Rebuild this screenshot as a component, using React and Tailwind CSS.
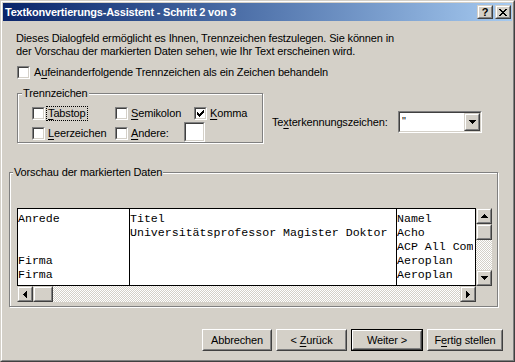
import React from 'react'

const UI = "font-['Liberation_Sans',Arial,sans-serif] text-[11px] tracking-[-0.14px] text-black"

function Check({ checked }) {
  return (
    <span className="flex h-[13px] w-[13px] shrink-0 border border-t-[#808080] border-l-[#808080] border-r-white border-b-white">
      <span className="flex flex-1 items-center justify-center border border-t-[#404040] border-l-[#404040] border-r-[#d4d0c8] border-b-[#d4d0c8] bg-white">
        {checked && (
          <svg width="7" height="7" viewBox="0 0 7 7" shapeRendering="crispEdges">
            <path d="M0 2h1v1h1v1h1v-1h1v-1h1v-1h1v-1h1v3h-1v1h-1v1h-1v1h-1v1h-1v-1h-1v-1h-1v-1h-1z" fill="#000" />
          </svg>
        )}
      </span>
    </span>
  )
}

function CheckRow({ checked, focus, children, className = '' }) {
  return (
    <div className={`flex items-center gap-[1px] ${className}`}>
      <Check checked={checked} />
      <span
        className={`border pl-[1px] pr-[1px] leading-[13px] ${
          focus ? 'border-dotted border-black' : 'border-transparent'
        }`}
      >
        {children}
      </span>
    </div>
  )
}

function U({ children }) {
  return <span className="underline underline-offset-[2px]">{children}</span>
}

function Raised({ children, className = '' }) {
  return (
    <div className={`flex border border-t-[#d4d0c8] border-l-[#d4d0c8] border-r-[#404040] border-b-[#404040] ${className}`}>
      <div className="flex flex-1 items-center justify-center border border-t-white border-l-white border-r-[#808080] border-b-[#808080] bg-[#d4d0c8]">
        {children}
      </div>
    </div>
  )
}

function Arrow({ dir }) {
  const paths = {
    up: 'M3 0h1v1h1v1h1v1h1v1h-7v-1h1v-1h1v-1h1z',
    down: 'M0 0h7v1h-1v1h-1v1h-1v1h-1v-1h-1v-1h-1v-1h-1z',
    left: 'M3 0h1v7h-1v-1h-1v-1h-1v-1h-1v-1h1v-1h1v-1h1z',
    right: 'M0 0h1v1h1v1h1v1h1v1h-1v1h-1v1h-1v1h-1z',
  }
  const vert = dir === 'up' || dir === 'down'
  return (
    <svg width={vert ? 7 : 4} height={vert ? 4 : 7} viewBox={vert ? '0 0 7 4' : '0 0 4 7'} shapeRendering="crispEdges">
      <path d={paths[dir]} fill="#000" />
    </svg>
  )
}

function Button({ children, w, isDefault }) {
  const face = (
    <div className="flex h-full border border-t-white border-l-white border-r-[#404040] border-b-[#404040]">
      <div className="flex flex-1 items-center justify-center border border-t-[#d4d0c8] border-l-[#d4d0c8] border-r-[#808080] border-b-[#808080] leading-[13px] whitespace-pre">
        {children}
      </div>
    </div>
  )
  return (
    <div className={`h-[22px] ${w} ${isDefault ? 'border border-black' : ''}`}>{face}</div>
  )
}

const rows = [
  ['Anrede', 'Titel', 'Namel'],
  ['', 'Universitätsprofessor Magister Doktor', 'Acho'],
  ['', '', 'ACP All Company'],
  ['Firma', '', 'Aeroplan'],
  ['Firma', '', 'Aeroplan'],
]

const track =
  'bg-[image:repeating-conic-gradient(#ffffff_0%_25%,#d4d0c8_0%_50%)] bg-size-[2px_2px]'

export default function App() {
  return (
    <div className={`h-[362px] w-[515px] overflow-hidden ${UI}`}>
      <div className="flex h-full flex-col border border-t-[#d4d0c8] border-l-[#d4d0c8] border-r-[#404040] border-b-[#404040]">
        <div className="flex flex-1 flex-col border border-t-white border-l-white border-r-[#808080] border-b-[#808080] bg-[#d4d0c8] p-[1px]">
          {/* title bar */}
          <div className="flex h-[18px] shrink-0 items-center justify-between bg-linear-to-r from-[#0a246a] to-[#a6caf0] pl-[2px] pr-[1px]">
            <span className="text-[11px] font-bold tracking-[-0.2px] text-white">Textkonvertierungs-Assistent - Schritt 2 von 3</span>
            <div className="flex gap-[2px]">
              <Raised className="h-[14px] w-[16px]">
                <span className="text-[11px] leading-[10px] font-bold">?</span>
              </Raised>
              <Raised className="h-[14px] w-[16px]">
                <svg width="8" height="7" viewBox="0 0 8 7" shapeRendering="crispEdges">
                  <path d="M0 0h2v1h1v1h2v-1h1v-1h2v1h-1v1h-1v1h-1v1h1v1h1v1h1v1h-2v-1h-1v-1h-2v1h-1v1h-2v-1h1v-1h1v-1h1v-1h-1v-1h-1z" fill="#000" />
                </svg>
              </Raised>
            </div>
          </div>

          {/* intro text */}
          <p className="mt-[11px] ml-[13px] leading-[13px]">
            Dieses Dialogfeld ermöglicht es Ihnen, Trennzeichen festzulegen. Sie können in
            <br />
            der Vorschau der markierten Daten sehen, wie Ihr Text erscheinen wird.
          </p>

          <div className="mt-[8px] ml-[14px] flex h-[13px] items-center gap-[4px]">
            <Check />
            <span className="leading-[13px]">
              A<U>u</U>feinanderfolgende Trennzeichen als ein Zeichen behandeln
            </span>
          </div>

          {/* delimiters + text qualifier */}
          <div className="mt-[14px] ml-[14px] flex items-start">
            <div className="relative h-[50px] w-[246px] shrink-0 border border-[#808080] shadow-[inset_1px_1px_0_#ffffff,1px_1px_0_#ffffff]">
              <span className="absolute top-[-7px] left-[4px] bg-[#d4d0c8] px-[1px] leading-[13px]">Trennzeichen</span>
              <div className="pt-[12px] pl-[14px]">
                <div className="flex h-[15px] items-center">
                  <CheckRow focus className="w-[83px]">
                    <U>T</U>abstop
                  </CheckRow>
                  <CheckRow className="w-[79px]">
                    <U>S</U>emikolon
                  </CheckRow>
                  <CheckRow checked>
                    <U>K</U>omma
                  </CheckRow>
                </div>
                <div className="flex h-[21px] items-end">
                  <CheckRow className="mb-[1px] w-[83px]">
                    <U>L</U>eerzeichen
                  </CheckRow>
                  <CheckRow className="mb-[1px] w-[69px]">
                    <U>A</U>ndere:
                  </CheckRow>
                  <div className="flex h-[20px] w-[21px] border border-t-[#808080] border-l-[#808080] border-r-white border-b-white">
                    <div className="flex-1 border border-t-[#404040] border-l-[#404040] border-r-[#d4d0c8] border-b-[#d4d0c8] bg-white" />
                  </div>
                </div>
              </div>
            </div>

            <div className="mt-[18px] ml-[9px] flex h-[22px] items-center">
              <span className="w-[126px] leading-[13px]">
                Te<U>x</U>terkennungszeichen:
              </span>
              <div className="flex h-[22px] w-[84px] border border-t-[#808080] border-l-[#808080] border-r-white border-b-white">
                <div className="flex flex-1 border border-t-[#404040] border-l-[#404040] border-r-[#d4d0c8] border-b-[#d4d0c8] bg-white">
                  <span className="flex-1 pl-[2px] leading-[16px]">"</span>
                  <Raised className="h-[18px] w-[16px]">
                    <Arrow dir="down" />
                  </Raised>
                </div>
              </div>
            </div>
          </div>

          {/* preview */}
          <div className="relative mt-[29px] ml-[6px] h-[135px] w-[489px] shrink-0 border border-[#808080] shadow-[inset_1px_1px_0_#ffffff,1px_1px_0_#ffffff]">
            <span className="absolute top-[-7px] left-[3px] bg-[#d4d0c8] px-[1px] leading-[13px]">
              Vorschau der markierten Daten
            </span>
            <div className="mt-[35px] ml-[7px] grid w-[475px] grid-cols-[459px_16px] grid-rows-[78px_16px]">
              <div className="flex overflow-hidden border border-black bg-white pt-[3px] font-['Liberation_Mono','Courier_New',monospace] text-[11.6px] leading-[14px] tracking-normal">
                {[112, 267, 76].map((w, ci) => (
                  <div
                    key={ci}
                    className={`-mt-[3px] h-[76px] shrink-0 overflow-hidden whitespace-pre pt-[3px] ${ci < 2 ? 'border-r border-black' : ''}`}
                    style={{ width: w }}
                  >
                    {rows.map((r, ri) => (
                      <div key={ri} className="h-[14px]">
                        {r[ci]}
                      </div>
                    ))}
                  </div>
                ))}
              </div>

              {/* vertical scrollbar */}
              <div className={`flex flex-col ${track}`}>
                <Raised className="h-[16px] w-[16px]">
                  <Arrow dir="up" />
                </Raised>
                <Raised className="h-[16px] w-[16px]" />
                <div className="flex-1" />
                <Raised className="h-[16px] w-[16px]">
                  <Arrow dir="down" />
                </Raised>
              </div>

              {/* horizontal scrollbar */}
              <div className={`flex ${track}`}>
                <Raised className="h-[16px] w-[16px]">
                  <Arrow dir="left" />
                </Raised>
                <Raised className="h-[16px] w-[20px]" />
                <div className="flex-1" />
                <Raised className="h-[16px] w-[16px]">
                  <Arrow dir="right" />
                </Raised>
              </div>
              <div className="bg-[#d4d0c8]" />
            </div>
          </div>

          {/* buttons */}
          <div className="mt-[22px] flex justify-end gap-[4px] pr-[9px]">
            <Button w="w-[70px]">Abbrechen</Button>
            <Button w="w-[71px]">
              {'< '}
              <U>Z</U>urück
            </Button>
            <Button w="w-[72px]" isDefault>
              Weiter &gt;
            </Button>
            <Button w="w-[76px]">
              F<U>e</U>rtig stellen
            </Button>
          </div>
        </div>
      </div>
    </div>
  )
}
